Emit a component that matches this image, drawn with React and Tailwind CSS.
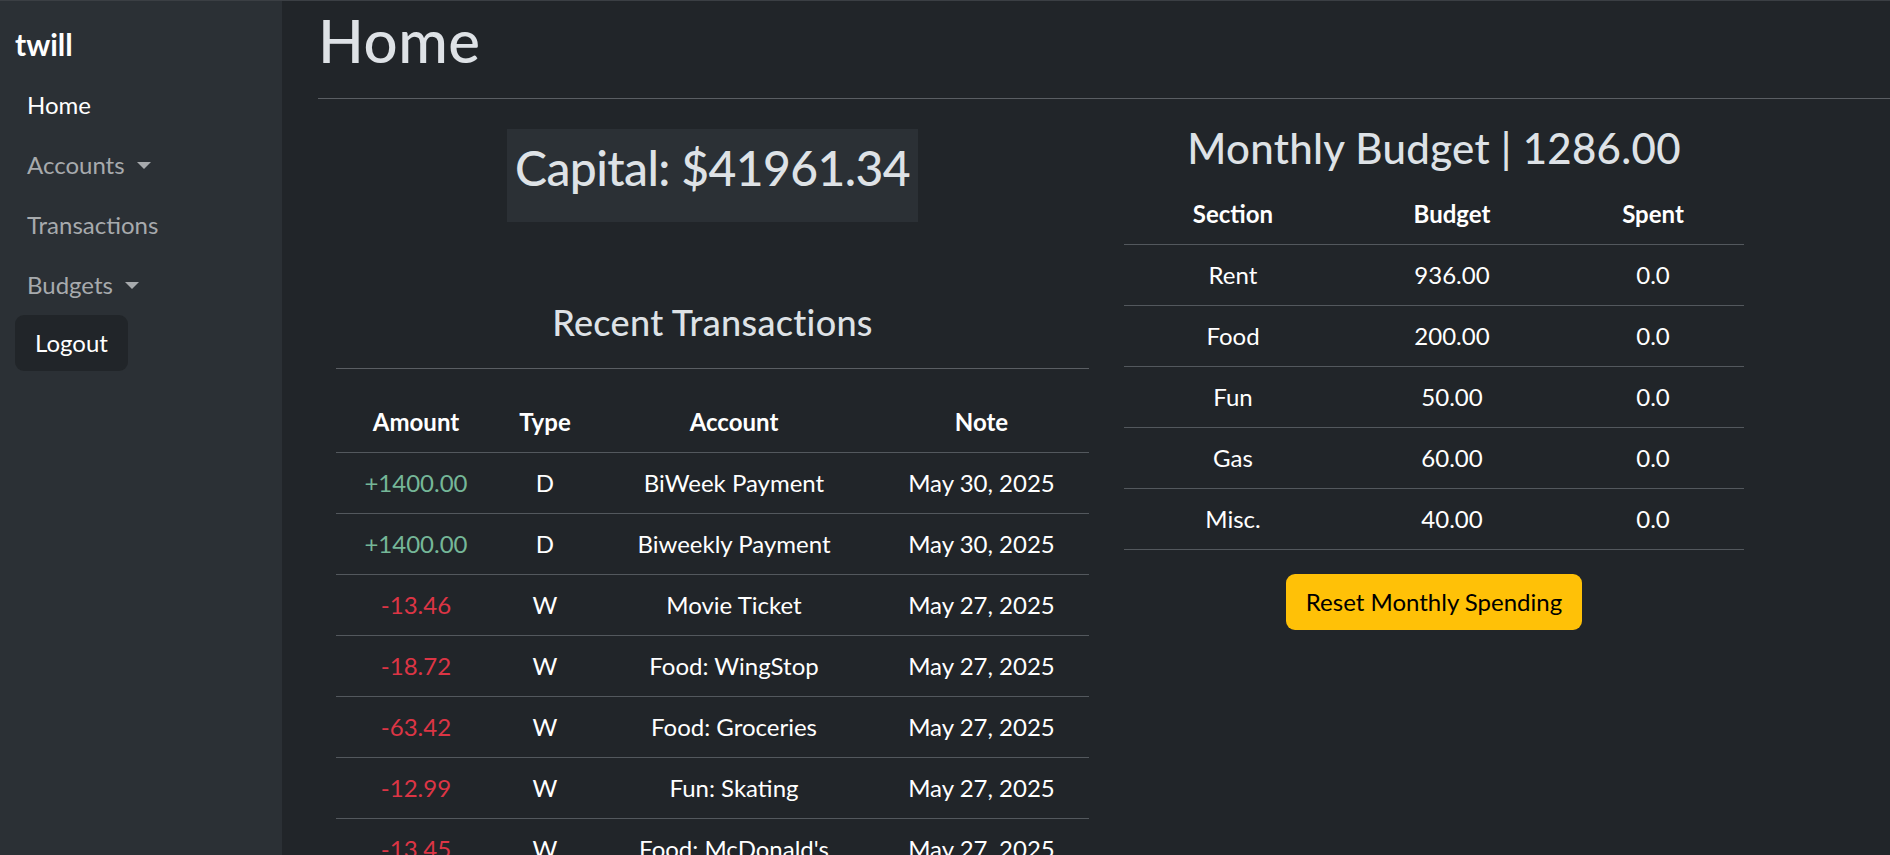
import React from "react";

const transactions = [
  { amount: "+1400.00", type: "D", account: "BiWeek Payment", note: "May 30, 2025" },
  { amount: "+1400.00", type: "D", account: "Biweekly Payment", note: "May 30, 2025" },
  { amount: "-13.46", type: "W", account: "Movie Ticket", note: "May 27, 2025" },
  { amount: "-18.72", type: "W", account: "Food: WingStop", note: "May 27, 2025" },
  { amount: "-63.42", type: "W", account: "Food: Groceries", note: "May 27, 2025" },
  { amount: "-12.99", type: "W", account: "Fun: Skating", note: "May 27, 2025" },
  { amount: "-13.45", type: "W", account: "Food: McDonald's", note: "May 27, 2025" },
];

const budget = [
  { section: "Rent", budget: "936.00", spent: "0.0" },
  { section: "Food", budget: "200.00", spent: "0.0" },
  { section: "Fun", budget: "50.00", spent: "0.0" },
  { section: "Gas", budget: "60.00", spent: "0.0" },
  { section: "Misc.", budget: "40.00", spent: "0.0" },
];

const Caret = () => (
  <span className="ml-[12px] inline-block w-0 h-0 border-x-[7px] border-x-transparent border-t-[7px] border-t-[#a7aaad]" />
);

const Sidebar = () => (
  <aside className="w-[282px] shrink-0 bg-[#2b3035] px-[15px] pt-[21px]">
    <div className="text-[30px] leading-[45px] font-bold text-white">twill</div>
    <ul className="mt-[8px]">
      <li className="pl-[12px] py-[12px] leading-[36px] text-white">Home</li>
      <li className="pl-[12px] py-[12px] leading-[36px] text-[#a7aaad] flex items-center">
        Accounts <Caret />
      </li>
      <li className="pl-[12px] py-[12px] leading-[36px] text-[#a7aaad]">Transactions</li>
      <li className="pl-[12px] py-[12px] leading-[36px] text-[#a7aaad] flex items-center">
        Budgets <Caret />
      </li>
      <li>
        <button className="w-[113px] h-[56px] rounded-[9px] bg-[#212529] text-white leading-[36px]">Logout</button>
      </li>
    </ul>
  </aside>
);

const RecentTransactions = () => (
  <table className="w-full table-fixed text-center">
    <colgroup>
      <col className="w-[160px]" />
      <col className="w-[98px]" />
      <col className="w-[280px]" />
      <col className="w-[215px]" />
    </colgroup>
    <thead>
      <tr className="border-b border-[#53585d]">
        <th className="py-[12px] leading-[36px] font-bold text-white">Amount</th>
        <th className="py-[12px] leading-[36px] font-bold text-white">Type</th>
        <th className="py-[12px] leading-[36px] font-bold text-white">Account</th>
        <th className="py-[12px] leading-[36px] font-bold text-white">Note</th>
      </tr>
    </thead>
    <tbody>
      {transactions.map((t, i) => (
        <tr key={i} className="border-b border-[#53585d]">
          <td className={`py-[12px] leading-[36px] ${t.amount.startsWith("+") ? "text-[#75b798]" : "text-[#dc3545]"}`}>{t.amount}</td>
          <td className="py-[12px] leading-[36px] text-white">{t.type}</td>
          <td className="py-[12px] leading-[36px] text-white">{t.account}</td>
          <td className="py-[12px] leading-[36px] text-white">{t.note}</td>
        </tr>
      ))}
    </tbody>
  </table>
);

const BudgetTable = () => (
  <table className="w-full table-fixed text-center">
    <colgroup>
      <col className="w-[218px]" />
      <col className="w-[220px]" />
      <col className="w-[182px]" />
    </colgroup>
    <thead>
      <tr className="border-b border-[#53585d]">
        <th className="py-[12px] leading-[36px] font-bold text-white">Section</th>
        <th className="py-[12px] leading-[36px] font-bold text-white">Budget</th>
        <th className="py-[12px] leading-[36px] font-bold text-white">Spent</th>
      </tr>
    </thead>
    <tbody>
      {budget.map((b) => (
        <tr key={b.section} className="border-b border-[#53585d]">
          <td className="py-[12px] leading-[36px] text-white">{b.section}</td>
          <td className="py-[12px] leading-[36px] text-white">{b.budget}</td>
          <td className="py-[12px] leading-[36px] text-white">{b.spent}</td>
        </tr>
      ))}
    </tbody>
  </table>
);

export default function App() {
  return (
    <div
      className="min-h-screen flex bg-[#212529] border-t border-[#3b3f44] text-[24px] text-[#dee2e6]"
      style={{ fontFamily: "Lato, 'Noto Sans', sans-serif" }}
    >
      <Sidebar />
      <main className="flex-1 pl-[36px] pt-[3px]">
        <h1 className="text-[60px] leading-[72px] font-medium tracking-[0.5px]">Home</h1>
        <hr className="mt-[22px] border-0 border-t border-[#5a5e63]" />
        <div className="flex pl-[18px] gap-[35px] mt-[24px]">
          <section className="w-[753px] pt-[6px]">
            <div className="w-[411px] h-[93px] mx-auto bg-[#2b3035] pt-[10px] text-center">
              <h2 className="text-[48px] leading-[58px] font-medium tracking-[-0.6px]">Capital: $41961.34</h2>
            </div>
            <h3 className="mt-[79px] text-[36px] leading-[43px] font-medium text-center tracking-[0.3px]">Recent Transactions</h3>
            <hr className="mt-[24px] border-0 border-t border-[#5a5e63]" />
            <div className="mt-[23px]">
              <RecentTransactions />
            </div>
          </section>
          <section className="w-[620px]">
            <h2 className="text-[42px] leading-[50px] font-medium text-center tracking-[0.3px]">Monthly Budget | 1286.00</h2>
            <div className="mt-[11px]">
              <BudgetTable />
            </div>
            <div className="mt-[24px] flex justify-center">
              <button className="w-[296px] h-[56px] rounded-[9px] bg-[#ffc107] text-black leading-[36px]">
                Reset Monthly Spending
              </button>
            </div>
          </section>
        </div>
      </main>
    </div>
  );
}
